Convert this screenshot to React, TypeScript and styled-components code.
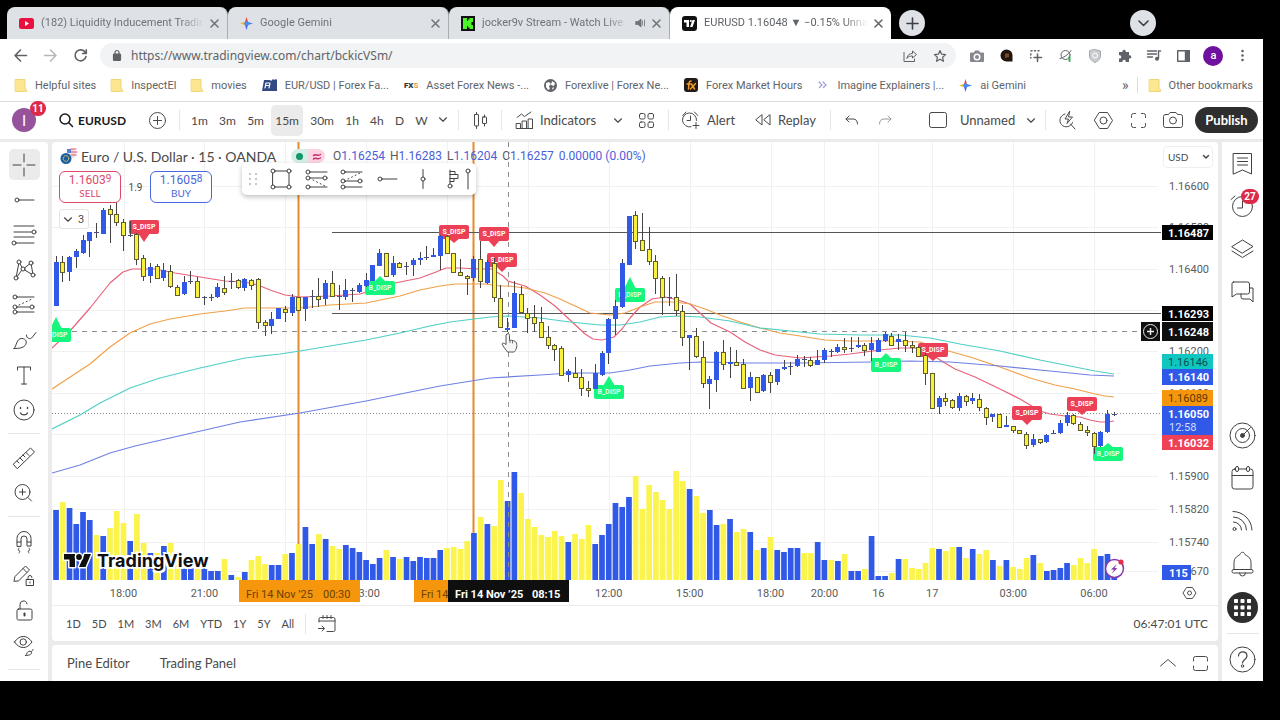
import React from "react";
import styled, { createGlobalStyle, css } from "styled-components";

const GlobalStyle = createGlobalStyle`
  * { box-sizing: border-box; }
  html, body { margin: 0; background: #000; }
  body { font-family: Lato, "Liberation Sans", sans-serif; color: #4a4a4a; }
  button, input, select { font: inherit; color: inherit; border: 0; padding: 0; margin: 0; background: none; }
  a { color: inherit; text-decoration: none; }
`;

/* ---------- shared parts ---------- */

const Glyph = styled.svg`
  display: block;
  flex: none;
  fill: none;
  stroke: currentColor;
  stroke-linecap: round;
  stroke-linejoin: round;
  overflow: visible;
`;

type IconProps = { w: number; h?: number; sw?: number; children: React.ReactNode };
const Icon = ({ w, h = w, sw = 1, children }: IconProps) => (
  <Glyph width={w} height={h} viewBox={`0 0 ${w} ${h}`} strokeWidth={sw} aria-hidden="true">
    {children}
  </Glyph>
);

const Chevron = () => (
  <Icon w={8} h={5} sw={1.2}>
    <path d="M.5.8 4 4.2 7.5.8" />
  </Icon>
);

const IconButton = styled.button<{ $w?: number }>`
  width: ${(p) => p.$w ?? 24}px;
  height: 30px;
  flex: none;
  display: flex;
  align-items: center;
  justify-content: center;
`;

const Spacer = styled.div<{ $w?: number }>`
  flex: ${(p) => (p.$w ? `0 0 ${p.$w}px` : "1")};
`;

/* ---------- browser frame ---------- */

const Page = styled.div`
  padding: 0 17px 39px 0;
  background: #000;
`;

const TabStrip = styled.div`
  height: 39px;
  padding: 7px 0 0 7px;
  display: flex;
  background: #000;
`;

const Tab = styled.div<{ $active?: boolean }>`
  width: 221px;
  height: 32px;
  padding: 0 9px 0 12px;
  display: flex;
  align-items: center;
  gap: 7px;
  border-radius: 8px 8px 0 0;
  font: 11px/32px Roboto, "Liberation Sans", sans-serif;
  background: ${(p) => (p.$active ? "#fff" : "#dee1e6")};
  color: ${(p) => (p.$active ? "#5f6368" : "#6f7378")};
  border-right: ${(p) => (p.$active ? "0" : "1px solid #a9adb2")};
`;

const TabTitle = styled.a`
  flex: 1;
  min-width: 0;
  overflow: hidden;
  white-space: nowrap;
  mask-image: linear-gradient(90deg, #000 85%, transparent);
`;

const CircleButton = styled.button`
  width: 26px;
  height: 26px;
  margin-top: 3px;
  border-radius: 50%;
  display: flex;
  align-items: center;
  justify-content: center;
  background: #dee1e6;
  color: #3c4043;
`;

const WindowButtons = styled.div`
  flex: 1;
  padding: 0 107px 0 8px;
  display: flex;
  justify-content: space-between;
`;

const NavBar = styled.div`
  height: 33px;
  padding: 0 8px;
  display: flex;
  align-items: center;
  background: #fff;
  color: #5f6368;
`;

const NavGroup = styled.div`
  width: 92px;
  flex: none;
  display: flex;
  gap: 6px;
`;

const AddressBox = styled.form`
  flex: 1;
  height: 25px;
  padding: 0 4px 0 13px;
  display: flex;
  align-items: center;
  gap: 10px;
  border-radius: 13px;
  background: #f1f3f4;
`;

const AddressInput = styled.input`
  flex: 1;
  min-width: 0;
  font: 12px "Noto Sans", sans-serif;
  color: #5f6368;
`;

const AddressActions = styled.div`
  display: flex;
  gap: 6px;
`;

const Extensions = styled.div`
  width: 299px;
  flex: none;
  padding-left: 9px;
  display: flex;
  justify-content: space-between;
`;

const Profile = styled.span`
  width: 20px;
  height: 20px;
  border-radius: 50%;
  background: #6f109f;
  color: #fff;
  font: 500 11px/19px Roboto, sans-serif;
  text-align: center;
`;

const Bookmarks = styled.nav`
  height: 30px;
  padding: 0 10px 3px 15px;
  display: flex;
  align-items: center;
  gap: 15px;
  border-bottom: 1px solid #dadce0;
  background: #fff;
  color: #5f6368;
  font: 11px Roboto, "Liberation Sans", sans-serif;
  white-space: nowrap;
`;

const Bookmark = styled.a`
  flex: none;
  display: flex;
  align-items: center;
  gap: 8px;
`;

const FxsMark = styled.span`
  font: 700 8px Roboto, sans-serif;
  color: #e8963a;
  b { color: #333; }
`;

const More = styled.button`
  margin-left: auto;
  padding-right: 8px;
  border-right: 1px solid #dadce0;
  font-size: 14px;
  line-height: 16px;
`;

const OtherBookmarks = styled(Bookmark)`
  margin-left: -4px;
`;

const Folder = () => (
  <Icon w={12} h={13}>
    <path d="M.5.5h9.5v9l1.5 1v2H.5z" fill="#fce68f" stroke="#eed57a" />
  </Icon>
);

const Close = () => (
  <Icon w={7} sw={1.5}>
    <path d="m0 0 7 7M7 0 0 7" />
  </Icon>
);

const Spark = () => (
  <Icon w={13} sw={0}>
    <path d="M6.5 0 8 5 6.5 6.5 5 5z" fill="#e8453c" />
    <path d="M13 6.5 8 8 6.5 6.5 8 5z" fill="#4285f4" />
    <path d="M6.5 13 5 8l1.5-1.5L8 8z" fill="#4267e8" />
    <path d="M0 6.5 5 5l1.5 1.5L5 8z" fill="#e9b716" />
    <circle cx="6.5" cy="6.5" r="2.2" fill="#4c8bf0" />
  </Icon>
);

/* ---------- TradingView shell ---------- */

const Shell = styled.main`
  background: #ebebeb;
`;

const TopBar = styled.header`
  height: 37px;
  padding: 0 5px 1px 0;
  display: flex;
  align-items: center;
  background: #fff;
  font-size: 13px;
  white-space: nowrap;
  color: #4a4a4a;
`;

const Account = styled.button`
  position: relative;
  width: 48px;
  height: 36px;
  flex: none;
  padding-left: 12px;
`;

const AccountDisc = styled.span`
  display: block;
  width: 24px;
  height: 24px;
  border-radius: 50%;
  background: #96539b;
  color: #fff;
  font-size: 15px;
  line-height: 24px;
`;

const Badge = styled.span<{ $top: number; $left: number; $w: number }>`
  position: absolute;
  top: ${(p) => p.$top}px;
  left: ${(p) => p.$left}px;
  width: ${(p) => p.$w}px;
  height: 15px;
  border-radius: 8px;
  background: #dc2a48;
  color: #fff;
  font: 700 10px/15px Roboto, sans-serif;
  text-align: center;
`;

const SymbolButton = styled.button`
  width: 88px;
  height: 30px;
  flex: none;
  padding-left: 11px;
  display: flex;
  align-items: center;
  gap: 5px;
  font-size: 12px;
  font-weight: 700;
  color: #1a1a1a;
`;

const Divider = styled.i`
  width: 1px;
  height: 20px;
  flex: none;
  background: #e6e6e6;
`;

const Intervals = styled.div`
  width: 278px;
  flex: none;
  padding: 0 7px;
  display: flex;
  justify-content: space-between;
`;

const Interval = styled.button<{ $on?: boolean }>`
  height: 31px;
  padding: 0 4px;
  border-radius: 5px;
  font-size: 12px;
  background: ${(p) => (p.$on ? "#ebebeb" : "none")};
`;

const LabelButton = styled.button<{ $w: number; $pad?: number; $gap?: number }>`
  width: ${(p) => p.$w}px;
  height: 30px;
  flex: none;
  padding-left: ${(p) => p.$pad ?? 0}px;
  display: flex;
  align-items: center;
  gap: ${(p) => p.$gap ?? 7}px;
`;

const Publish = styled.button`
  width: 63px;
  height: 26px;
  flex: none;
  border-radius: 13px;
  background: #2e2e2e;
  color: #fff;
  font-size: 13px;
  font-weight: 700;
`;

const Body = styled.div`
  padding-top: 3px;
  display: flex;
  gap: 4px;
`;

const SideBar = styled.aside<{ $w: number }>`
  width: ${(p) => p.$w}px;
  flex: none;
  display: flex;
  flex-direction: column;
  align-items: center;
  background: #fff;
  color: #404040;
`;

const LeftTools = styled(SideBar)`
  padding-top: 5px;
  border-top-right-radius: 4px;
`;

const Tool = styled.button<{ $on?: boolean }>`
  width: 31px;
  height: 31px;
  margin: 2px 0;
  flex: none;
  display: flex;
  align-items: center;
  justify-content: center;
  border-radius: 5px;
  background: ${(p) => (p.$on ? "#ebebeb" : "none")};
`;

const Rule = styled.hr<{ $gap: number }>`
  width: 32px;
  height: 1px;
  margin: ${(p) => p.$gap}px 0;
  flex: none;
  border: 0;
  background: #e6e6e6;
`;

const Widget = styled.button`
  position: relative;
  width: 41px;
  height: 43px;
  flex: none;
  display: flex;
  align-items: center;
  justify-content: center;
`;

const Center = styled.section`
  flex: 1;
  min-width: 0;
  display: flex;
  flex-direction: column;
`;

const ChartPane = styled.div`
  position: relative;
  background: #fff;
  border-radius: 4px 4px 0 0;
  overflow: hidden;
`;

const ChartSvg = styled.svg`
  display: block;
  width: 100%;
  height: auto;
  font-family: Roboto, "Liberation Sans", sans-serif;
  font-size: 11px;
`;

const Legend = styled.div`
  position: absolute;
  top: 5px;
  left: 8px;
  height: 18px;
  display: flex;
  align-items: center;
  white-space: nowrap;
`;

const Title = styled.h1`
  width: 214px;
  margin: 0;
  padding-left: 4px;
  font-size: 14px;
  font-weight: 400;
  color: #4a4a4a;
`;

const Status = styled.span<{ $c: string; $side: "l" | "r" }>`
  width: 17px;
  height: 14px;
  display: flex;
  align-items: center;
  justify-content: center;
  background: ${(p) => p.$c};
  ${(p) => (p.$side === "l" ? css`border-radius: 7px 0 0 7px;` : css`border-radius: 0 7px 7px 0;`)}
`;

const Ohlc = styled.dl`
  margin: 0 0 0 8px;
  display: flex;
  gap: 5px;
  font: 12px/18px Roboto, sans-serif;
`;

const OhlcItem = styled.div`
  display: flex;
  dd { margin: 0; color: #4a5fd8; }
  dt { color: #5a5a5a; }
`;

const Quotes = styled.div`
  position: absolute;
  top: 29px;
  left: 7px;
  display: flex;
  align-items: center;
  font: 11px Roboto, sans-serif;
`;

const Quote = styled.button<{ $c: string }>`
  width: 62px;
  height: 32px;
  border: 1px solid ${(p) => p.$c};
  border-radius: 6px;
  background: #fff;
  color: ${(p) => p.$c};
  font-size: 12px;
  line-height: 13px;
  sup { font-size: 10px; line-height: 1px; vertical-align: 2px; }
  small { display: block; font: 10px/13px Lato, sans-serif; }
`;

const Spread = styled.span`
  width: 29px;
  text-align: center;
  font-size: 10px;
`;

const Collapse = styled.button`
  position: absolute;
  top: 67px;
  left: 7px;
  width: 30px;
  height: 20px;
  display: flex;
  align-items: center;
  justify-content: center;
  gap: 6px;
  border: 1px solid #e3e3e3;
  border-radius: 3px;
  background: #fff;
  font: 11px Roboto, sans-serif;
`;

const Floating = styled.div`
  position: absolute;
  top: 21px;
  left: 190px;
  width: 234px;
  height: 32px;
  padding: 0 5px 0 7px;
  display: flex;
  align-items: center;
  justify-content: space-between;
  border-radius: 5px;
  background: #fff;
  color: #404040;
  box-shadow: 0 2px 5px rgba(0, 0, 0, 0.25);
`;

const Brand = styled.a`
  position: absolute;
  top: 409px;
  left: 12px;
  display: flex;
  align-items: center;
  gap: 5px;
  color: #0f0f0f;
  font: 700 18px/20px Inter, sans-serif;
  text-shadow: 1px 0 #fff, -1px 0 #fff, 0 1px #fff, 0 -1px #fff, 2px 2px #fff, -2px 2px #fff, 2px -2px #fff, -2px -2px #fff;
`;

const Currency = styled.label`
  position: absolute;
  top: 4px;
  right: 5px;
  width: 50px;
  height: 22px;
  padding: 0 3px 0 4px;
  display: flex;
  align-items: center;
  justify-content: space-between;
  border: 1px solid #efefef;
  border-radius: 4px;
  background: #fff;
  select { appearance: none; width: 30px; font: 10px Lato, sans-serif; }
`;

const RangeBar = styled.div`
  height: 36px;
  padding: 0 10px 0 14px;
  display: flex;
  align-items: center;
  border-top: 1px solid #ececec;
  border-radius: 0 0 4px 4px;
  background: #fff;
  font-size: 12px;
`;

const Range = styled.button`
  margin-right: 11px;
  font-size: 11px;
`;

const Clock = styled.button`
  margin-left: auto;
`;

const Dock = styled.div`
  height: 36px;
  margin-top: 4px;
  padding: 0 10px 0 15px;
  display: flex;
  align-items: center;
  gap: 30px;
  border-radius: 4px 4px 0 0;
  background: #fff;
  font-size: 13px;
`;

const DockEnd = styled.div`
  margin-left: auto;
  display: flex;
  align-items: center;
  gap: 17px;
`;

/* ---------- chart data ---------- */

const BLUE = "#3059e8";
const YELLOW = "#fbf44d";
const STEP = 6.74;
const xOf = (i: number) => 56.1 + STEP * i;

/* colour (b, y or d for a doji), high, low, body top, body bottom */
type Candle = [string, number, number, number, number];
const candles: Candle[] = [
  ["b", 256, 306, 262, 306], ["y", 256, 282, 262, 272], ["b", 256, 281, 257, 272], ["b", 249, 268, 251, 257],
  ["b", 235, 254, 240, 253], ["b", 232, 257, 232, 241], ["d", 223, 238, 232, 233], ["b", 208, 234, 210, 234],
  ["y", 205, 243, 209, 214], ["y", 202, 226, 214, 222], ["y", 219, 251, 222, 235], ["d", 221, 237, 235, 236],
  ["y", 233, 265, 234, 259], ["y", 255, 281, 258, 276], ["b", 263, 283, 267, 276], ["y", 264, 279, 266, 278],
  ["b", 263, 281, 270, 278], ["y", 265, 288, 271, 286], ["y", 285, 296, 287, 295], ["b", 276, 295, 282, 294],
  ["d", 271, 284, 281, 282], ["y", 277, 298, 281, 297], ["d", 296, 305, 297, 298], ["d", 294, 301, 297, 298],
  ["b", 283, 298, 287, 297], ["y", 276, 295, 288, 292], ["d", 273, 289, 281, 282], ["y", 279, 289, 280, 287],
  ["b", 278, 291, 279, 288], ["y", 279, 290, 280, 285], ["y", 278, 329, 279, 322], ["y", 320, 336, 322, 325],
  ["b", 312, 334, 319, 326], ["b", 308, 319, 308, 319], ["y", 306, 322, 309, 312], ["b", 294, 316, 297, 313],
  ["y", 297, 311, 297, 310], ["b", 297, 321, 297, 309], ["d", 290, 308, 296, 297], ["y", 278, 307, 296, 299],
  ["b", 280, 305, 283, 299], ["y", 271, 297, 283, 296], ["d", 285, 310, 296, 297], ["b", 279, 300, 290, 297],
  ["d", 288, 302, 290, 291], ["b", 283, 293, 285, 292], ["b", 273, 287, 280, 286], ["b", 265, 281, 265, 281],
  ["b", 249, 266, 253, 266], ["y", 253, 276, 253, 276], ["b", 256, 277, 263, 275], ["y", 262, 267, 263, 267],
  ["d", 262, 275, 266, 267], ["b", 258, 276, 260, 265], ["b", 252, 265, 258, 260], ["d", 246, 260, 257, 258],
  ["b", 248, 257, 255, 257], ["b", 235, 270, 236, 256], ["y", 235, 254, 236, 253], ["y", 253, 273, 253, 272],
  ["y", 259, 276, 272, 275], ["y", 275, 295, 276, 278], ["b", 256, 281, 259, 278], ["y", 241, 288, 259, 281],
  ["b", 260, 284, 262, 283], ["y", 258, 302, 263, 297], ["y", 285, 328, 298, 327], ["b", 318, 332, 328, 330],
  ["b", 281, 328, 293, 328], ["y", 286, 312, 294, 312], ["y", 308, 333, 313, 318], ["y", 305, 332, 317, 323],
  ["y", 307, 338, 322, 337], ["y", 326, 349, 337, 345], ["y", 344, 361, 345, 349], ["y", 346, 376, 348, 375],
  ["b", 369, 382, 371, 375], ["y", 357, 378, 373, 377], ["y", 369, 396, 377, 388], ["y", 381, 397, 388, 390],
  ["b", 364, 389, 373, 389], ["b", 351, 376, 353, 375], ["b", 318, 364, 319, 353], ["b", 300, 335, 306, 319],
  ["b", 259, 308, 263, 307], ["b", 216, 265, 216, 265], ["y", 211, 249, 215, 241], ["y", 213, 251, 240, 250],
  ["y", 227, 265, 249, 261], ["y", 255, 294, 261, 278], ["y", 276, 315, 278, 297], ["d", 277, 306, 297, 298],
  ["y", 274, 316, 297, 310], ["y", 305, 346, 311, 337], ["b", 335, 370, 335, 338], ["y", 328, 358, 336, 356],
  ["y", 341, 388, 357, 383], ["b", 376, 409, 379, 384], ["b", 351, 392, 352, 380], ["y", 340, 370, 352, 364],
  ["b", 347, 378, 362, 364], ["y", 350, 366, 362, 365], ["y", 359, 389, 364, 388], ["b", 372, 401, 377, 388],
  ["y", 377, 392, 377, 392], ["b", 374, 392, 375, 391], ["y", 372, 393, 375, 382], ["b", 369, 385, 369, 382],
  ["b", 360, 370, 367, 369], ["d", 362, 375, 366, 367], ["b", 355, 367, 359, 366], ["d", 356, 367, 359, 360],
  ["y", 357, 367, 360, 365], ["b", 350, 365, 360, 365], ["b", 348, 363, 350, 360], ["d", 349, 357, 351, 352],
  ["b", 344, 353, 347, 352], ["y", 338, 353, 347, 349], ["d", 337, 352, 348, 349], ["b", 337, 348, 345, 347],
  ["y", 343, 356, 345, 350], ["b", 337, 361, 343, 350], ["b", 338, 352, 340, 352], ["b", 332, 342, 334, 341],
  ["y", 333, 346, 336, 345], ["b", 334, 350, 339, 342], ["y", 332, 352, 340, 345], ["y", 341, 353, 345, 347],
  ["y", 346, 357, 347, 356], ["y", 353, 385, 355, 373], ["y", 373, 409, 373, 408], ["b", 396, 414, 398, 407],
  ["y", 393, 406, 398, 401], ["y", 399, 409, 400, 407], ["b", 393, 411, 396, 408], ["y", 395, 406, 396, 401],
  ["b", 393, 404, 398, 401], ["y", 394, 411, 399, 407], ["y", 407, 425, 408, 417], ["b", 414, 422, 414, 417],
  ["y", 414, 428, 414, 427], ["b", 416, 427, 425, 427], ["y", 426, 433, 426, 430], ["y", 430, 433, 430, 433],
  ["y", 432, 449, 434, 445], ["b", 434, 447, 439, 445], ["y", 439, 444, 439, 442], ["b", 434, 443, 435, 442],
  ["d", 430, 434, 433, 434], ["b", 420, 434, 423, 433], ["b", 412, 426, 415, 423], ["y", 414, 425, 415, 423],
  ["y", 422, 431, 424, 430], ["y", 426, 436, 430, 432], ["y", 432, 454, 433, 446], ["b", 431, 447, 432, 446],
  ["b", 410, 433, 414, 432], ["d", 412, 416, 414, 415],
];

/* volume: colour and bar height for each candle */
const volume =
  "b70 y78 b72 b56 b68 b60 y45 b44 y52 y69 y57 b39 y66 y37 b27 y27 b34 y37 y15 b12 b12 y11 b12 b9 b9 y21 b5 y3 b8 y20 y24 y16 b15 b15 y26 b27 y36 b53 b36 y46 b41 y34 y31 b35 b32 b28 b20 b16 b22 y30 b23 y21 b23 b19 b23 b22 b22 b30 y32 y33 y31 y39 b47 y63 b56 y54 y100 b79 b108 y87 y61 y53 y45 y43 y49 y44 b38 y46 y41 y55 b36 b45 b56 b77 b73 b83 y104 y71 y95 y88 y80 y71 y109 y99 b91 y84 y67 b70 b55 y56 b61 y48 y51 b48 y30 b32 y43 b30 b28 b32 b32 y27 y27 b38 b20 y20 b19 y26 b9 b9 y11 b44 b4 b4 y7 b21 y21 y12 y11 y17 y32 b31 y29 y33 b33 y22 b31 y26 y30 b20 y14 b20 y13 y11 y22 b25 y17 b9 b10 b12 b17 y15 y22 y17 y31 b24 b26 b2"
    .split(" ")
    .map((v) => ({ up: v[0] === "b", h: Number(v.slice(1)) }));

const averages: [string, string][] = [
  ["#e8627a", "52,348 70,331 90,308 110,283 123,272 132,269 142,269 155,269 175,273 200,277 225,281 245,282 258,285 270,290 285,295 300,297 330,296 360,294 370,291 395,283 420,278 436,272 446,268 460,268 480,269 492,269 503,276 508,281 525,286 540,295 555,306 570,320 585,334 593,339 602,340 614,337 622,329 630,318 640,307 652,299 665,297 678,300 690,304 700,313 711,323 730,332 745,342 760,350 775,355 800,358 830,356 850,354 880,350 900,348 915,348 930,353 940,360 955,369 975,377 1000,389 1020,399 1040,411 1050,414 1065,416 1080,417 1090,420 1100,422 1107,422 1114,421"],
  ["#f0a048", "52,389 90,364 110,347 130,333 150,324 170,319 200,314 225,311 245,308 265,308 300,308 330,305 366,303 400,296 420,290 440,286 455,284 485,284 500,286 508,286 525,288 545,293 560,299 575,306 590,313 610,315 625,313 640,307 655,302 675,302 690,304 705,309 720,315 740,322 760,328 780,333 800,336 825,340 850,341 890,341 920,342 945,350 970,357 1000,367 1030,378 1055,385 1075,389 1095,394 1105,396 1114,397"],
  ["#4fcfc4", "52,429 80,415 100,403 130,388 160,378 200,368 245,358 280,354 300,351 330,346 366,340 400,333 430,326 450,322 490,317 508,316 540,318 570,322 600,325 620,325 640,322 660,317 680,316 700,317 730,321 760,328 790,331 820,334 860,335 900,335 930,338 960,344 1000,351 1040,360 1070,366 1095,371 1114,374"],
  ["#7080e4", "52,473 80,465 110,453 135,446 170,438 205,430 240,422 300,413 366,401 440,386 490,378 540,375 570,373 610,373 630,370 650,366 680,363 700,362 750,363 800,363 870,362 910,361 950,362 1000,366 1050,371 1090,375 1114,376"],
];

const sellFlags = [[144, 220, 242], [454, 225, 243], [494, 227, 247], [502, 253, 272], [933, 343, 361], [1027, 406, 425], [1082, 397, 415]];
const buyFlags = [[56, 328, 317], [380, 281, 276], [630, 288, 277], [609, 385, 376], [886, 358, 353], [1108, 447, 443]];

const ticks: [number, string][] = [
  [186, "1.16600"], [227, "1.16500"], [269, "1.16400"], [310, ""], [351, "1.16200"], [393, "1.16100"],
  [434, ""], [476, "1.15900"], [509, "1.15820"], [542, "1.15740"], [571, "1.15670"],
];

const times: [number, string][] = [
  [10, "18:00"], [22, "21:00"], [34, ""], [46, "03:00"], [58, ""], [70, ""], [82, "12:00"], [94, "15:00"],
  [106, "18:00"], [114, "20:00"], [122, "16"], [130, "17"], [142, "03:00"], [154, "06:00"],
];

const PriceTag = ({ y, h, fill, color = "#fff", text, bold = true }: { y: number; h: number; fill: string; color?: string; text: string; bold?: boolean }) => (
  <g>
    <rect x="1162" y={y} width="51" height={h} fill={fill} />
    <text x="1168" y={y + h / 2 + 4} fill={color} fontWeight={bold ? 700 : 400}>{text}</text>
  </g>
);

const TimeTag = ({ x, fill, color, time, bold }: { x: number; fill: string; color: string; time: string; bold?: boolean }) => (
  <g fill={color} fontWeight={bold ? 700 : 400}>
    <rect x={x} y="580" width="121" height="22" fill={fill} />
    <text x={x + 7} y="598">Fri 14 Nov ’25</text>
    <text x={x + 84} y="598">{time}</text>
  </g>
);

const Chart = () => (
  <ChartSvg viewBox="52 142 1166 463" role="img" aria-label="EURUSD 15 minute candles with volume">
    <g stroke="#f1f1f1" shapeRendering="crispEdges">
      {ticks.map(([y]) => <path key={y} d={`M52 ${y}H1158`} />)}
      {times.map(([i]) => <path key={i} d={`M${Math.round(xOf(i))} 142V580`} />)}
    </g>
    {volume.map((v, i) => (
      <rect key={i} x={xOf(i) - 2.9} y={580 - v.h} width="5.7" height={v.h} fill={v.up ? BLUE : YELLOW} />
    ))}
    <path d="M298.5 142V544M473.5 142V533" stroke="#e58a2c" strokeWidth="2" />
    <path d="M332 232.5H1161M332 313.5H1161" stroke="#555" />
    <path d="M52 413.5H1161" stroke="#8a8a8a" strokeDasharray="1 2" />
    <path d="M52 331.5H1140M508.5 142V580" stroke="#8c8c8c" strokeDasharray="5 5" />
    {averages.map(([c, p]) => <polyline key={c} points={p} fill="none" stroke={c} strokeWidth="1.2" strokeLinejoin="round" />)}
    <g fontSize="7" fontWeight="700" textAnchor="middle">
      {sellFlags.map(([x, y, tip]) => (
        <g key={x} fill="#ec4056">
          <rect x={x - 15} y={y} width="30" height="14" rx="2" />
          <path d={`M${x - 6} ${y + 13}h12L${x} ${tip}z`} />
          <text x={x} y={y + 9} fill="#fff">S_DISP</text>
        </g>
      ))}
      {buyFlags.map(([x, y, tip]) => (
        <g key={x} fill="#16f57c">
          <rect x={x - 15} y={y} width="30" height="14" rx="2" />
          <path d={`M${x - 6} ${y + 1}h12L${x} ${tip}z`} />
          <text x={x} y={y + 9} fill="#e4ffe9">B_DISP</text>
        </g>
      ))}
    </g>
    {candles.map(([c, hi, lo, top, bottom], i) => {
      const x = Math.floor(xOf(i)) + 0.5;
      return (
        <g key={i}>
          <path d={`M${x} ${hi}V${lo}`} stroke="#444" />
          {c === "b" && <rect x={x - 2.5} y={top} width="5" height={Math.max(2, bottom - top)} fill={BLUE} />}
          {c === "y" && <rect x={x - 2} y={top + 0.5} width="4" height={Math.max(1, bottom - top)} fill="#f8f03c" stroke="#5f5c30" />}
          {c === "d" && <path d={`M${x - 2.5} ${top + 0.5}h5`} stroke="#4a4f88" />}
        </g>
      );
    })}
    <g fill="#5a5a5a" textAnchor="middle">
      {times.map(([i, t]) => <text key={i} x={xOf(i)} y="597">{t}</text>)}
    </g>
    <g fill="#5a5a5a">
      {ticks.map(([y, t]) => <text key={y} x="1169" y={y + 4}>{t}</text>)}
    </g>
    <TimeTag x={239} fill="#f5960c" color="#6b4200" time="00:30" />
    <TimeTag x={414} fill="#f5960c" color="#6b4200" time="07:00" />
    <TimeTag x={448} fill="#0f0f0f" color="#fff" time="08:15" bold />
    <PriceTag y={225} h={15} fill="#000" text="1.16487" />
    <PriceTag y={306} h={15} fill="#000" text="1.16293" />
    <PriceTag y={322} h={19} fill="#0f0f0f" text="1.16248" />
    <PriceTag y={354} h={15} fill="#0fc7c0" color="#07504d" text="1.16146" bold={false} />
    <PriceTag y={369} h={16} fill={BLUE} text="1.16140" />
    <PriceTag y={390} h={16} fill="#f5960c" color="#5e3a00" text="1.16089" bold={false} />
    <rect x="1162" y="420" width="51" height="15" fill={BLUE} />
    <PriceTag y={406} h={16} fill={BLUE} text="1.16050" />
    <text x="1169" y="431" fill="#d6defc">12:58</text>
    <PriceTag y={435} h={15} fill="#ef4056" text="1.16032" />
    <rect x="1162" y="565" width="29" height="15" fill={BLUE} />
    <text x="1169" y="577" fill="#fff" fontWeight="700">115</text>
    <rect x="1141" y="322" width="19" height="19" fill="#0f0f0f" />
    <g fill="none" stroke="#e8e8e8">
      <circle cx="1150.5" cy="331.5" r="7" />
      <path d="M1147 331.5h7M1150.5 328v7" strokeWidth="1.5" />
    </g>
    <circle cx="1114.5" cy="568.5" r="9" fill="#fff" stroke="#8a3aa8" strokeWidth="1.5" />
    <path d="m1117 564-6 5.5 3 .3-2.5 4 6-5.6-3-.3z" fill="#8a3aa8" />
    <circle cx="1121" cy="562" r="2.6" fill="#e0304a" />
    <g fill="none" stroke="#505050">
      <path d="M1186.5 587.5h6l3.5 5.5-3.5 5.5h-6l-3.500-5.5z" />
      <circle cx="1189.5" cy="593" r="2" />
    </g>
    <path d="M507 334c1.5-1 2.5 0 2.5 1.5v5c2-.8 6 .2 7 2.5 1 3-.5 8-2.5 9h-6.500c-1.5-2-5-6.5-5.5-8 .5-1.5 2-1 4 .5v-9.500z" fill="#f6f6f6" stroke="#555" />
    <path d="M510 340v3M512.5 341v2.5" stroke="#777" />
  </ChartSvg>
);

/* ---------- toolbars ---------- */

const node = (x: number, y: number) => <circle key={`${x}-${y}`} cx={x} cy={y} r="2" fill="#fff" />;

const drawingTools: [string, React.ReactNode][] = [
  ["Cross", <path d="M5 16h8M19 16h8M16 5v8M16 19v8" />],
  ["Trend line", <><path d="M11 16h15" />{node(9, 16)}</>],
  ["Fib retracement", <><path d="M6 7h20M6 13h18M6 18h20M8 24h18" />{node(26, 13)}{node(6, 24)}</>],
  ["Patterns", <><path d="M8 24 11 8l4 7 8-6 2 12-10-6z" />{[node(8, 24), node(11, 8), node(15, 15), node(23, 9), node(25, 21)]}</>],
  ["Projection", <><path d="M9 8h17M9 18h15M9 23h17" /><path d="m11 16 13-6" strokeDasharray="1 3" />{[node(7, 8), node(7, 18), node(24, 18), node(7, 23)]}</>],
  ["Brush", <><path d="M6 24.5C9 22 8 14.5 14 14.5c4 0 5.5 4 3 7-2 2.5-6 3-11 3z" /><path d="M18.5 11c-.5 3.5 4 5 6 2l3.5-4.5" /></>],
  ["Text", <path d="M9.5 11V8h13v3M16 8v17M13.5 25h5" />],
  ["Icons", <><circle cx="16" cy="16" r="10" /><path d="M12.5 13.5v1M19.5 13.5v1M12.5 19c1.5 2.5 5.5 2.5 7 0" strokeWidth="1.4" /></>],
];

const measureTools: [string, React.ReactNode][] = [
  ["Measure", <><path d="M5.5 22 22.5 6l4 4-17 16.5z" /><path d="m9 19 2 2M12 16l3 3M15 13l2 2M18 10.5l3 3" /></>],
  ["Zoom in", <><circle cx="14.5" cy="15" r="7.5" /><path d="m20 20.5 3.5 3.5M11.5 15h6M14.5 12v6" /></>],
];

const lockTools: [string, React.ReactNode][] = [
  ["Magnet", <><path d="M9 21V13.5a7 7 0 0 1 14 0V21h-4v-7a3 3 0 0 0-6 0v7zM9 17h4M19 17h4" /><path d="m11 23-1 2 2 1-1 2M21 23l1 2-2 1 1 2" strokeWidth=".8" /></>],
  ["Stay in drawing mode", <><path d="m6 21 1-4.5L17.5 6l4 4L11 20.5zM15 8.5l4 4" /><path d="M18.5 19.5h7v6h-7zM20 19.5v-2a2 2 0 0 1 4 0" /><path d="M22 22v1" /></>],
  ["Lock all", <><rect x="9" y="14" width="15" height="11" rx="1.5" /><path d="M12 14v-4a3.5 3.5 0 0 1 7-1" /><path d="M16.5 18.5v2" strokeWidth="2" /></>],
  ["Hide all", <><path d="M6.5 12c5-7.5 12.5-7.5 17.5 0-5 7.5-12.5 7.5-17.5 0z" /><circle cx="15.2" cy="12" r="3.2" /><path d="M17.5 25.5c2-.5.5-4 4-4s3 4-4 4zM22 21c1 1.5 2 .5 3-1.5" /></>],
];

const ToolButton = ({ name, on, children }: { name: string; on?: boolean; children: React.ReactNode }) => (
  <Tool $on={on} aria-label={name}>
    <Icon w={32}>{children}</Icon>
  </Tool>
);

const widgetsTop: [string, React.ReactNode][] = [
  ["Watchlist", <path d="M6.5 5.5h18V26L15.5 22l-9 4zM10.5 10h10M10.5 13.5h10M10.5 17h10" />],
  ["Alerts", <><circle cx="15.5" cy="15.5" r="10" /><path d="M15.5 10v7h-5M4 8.5 8 5" /></>],
  ["Object tree", <><path d="m5 12.5 10.5-6.5L26 12.5l-10.5 6.5z" /><path d="m5 17 10.5 6.5L26 17" /></>],
  ["Chats", <><path d="M6.5 5h14q2 0 2 2v8q0 2-2 2H9.5L5 20V6.5Q5 5 6.5 5z" /><path d="M22.5 11H26v14l-3-3h-7q-2 0-2-2v-3" /></>],
];

const widgetsBottom: [string, React.ReactNode][] = [
  ["Screener", <><circle cx="15.5" cy="15.5" r="12.5" /><circle cx="15.5" cy="15.5" r="7" /><circle cx="15.5" cy="15.5" r="2" fill="currentColor" /><path d="m15.5 15.5 8-8" /></>],
  ["Calendar", <><rect x="5" y="6" width="21" height="20" rx="2.5" /><path d="M5 12.5h21" /><rect x="8.5" y="3.5" width="3" height="5" rx="1.5" fill="#fff" /><rect x="19.5" y="3.5" width="3" height="5" rx="1.5" fill="#fff" /></>],
  ["News", <><circle cx="7.5" cy="23" r="1.5" /><path d="M6.5 16a8 8 0 0 1 8 8M6.5 11a13 13 0 0 1 13 13M6 5.5A19 19 0 0 1 25 24" /></>],
  ["Notifications", <><path d="M7 20.5v-7c0-5 4-6.5 6-8 1-3 4-3 5 0 2 1.5 6 3 6 8v7" /><rect x="5" y="20.5" width="21" height="3.5" rx="1.5" /><path d="M12.5 24a3 3 0 0 0 6 0" /></>],
];

const intervals = ["1m", "3m", "5m", "15m", "30m", "1h", "4h", "D", "W"];

export default function App() {
  return (
    <Page>
      <GlobalStyle />
      <TabStrip>
        <Tab>
          <Icon w={15} h={11} sw={0}>
            <rect width="15" height="11" rx="2.5" fill="#e8103c" />
            <path d="M6 3v5l4-2.5z" fill="#fff" />
          </Icon>
          <TabTitle href="#">(182) Liquidity Inducement Trading</TabTitle>
          <Close />
        </Tab>
        <Tab>
          <Spark />
          <TabTitle href="#">Google Gemini</TabTitle>
          <Close />
        </Tab>
        <Tab>
          <Icon w={14} h={15} sw={0}>
            <rect width="14" height="15" fill="#111" />
            <path d="M2 2h4v3h1V3.5h1.500V2H12v4h-1.5v3H12v4H8.5v-1.5H7V10H6v3H2z" fill="#4cf52a" />
          </Icon>
          <TabTitle href="#">jocker9v Stream - Watch Live</TabTitle>
          <Icon w={10} h={8} sw={0.8}>
            <path d="M0 2.5h2L5 0v8L2 5.5H0z" fill="currentColor" />
            <path d="M6.5 2v4M8.5 1v6" />
          </Icon>
          <Close />
        </Tab>
        <Tab $active>
          <Icon w={15} sw={0}>
            <rect width="15" height="15" rx="3" fill="#111" />
            <path d="M2 4h5v7H4.5V6.5H2zM10.5 4H13l-2.5 7H8z" fill="#fff" />
            <circle cx="8.8" cy="5" r="1.1" fill="#fff" />
          </Icon>
          <TabTitle href="#">EURUSD 1.16048 ▼ −0.15% Unnamed</TabTitle>
          <Close />
        </Tab>
        <WindowButtons>
          <CircleButton aria-label="New tab"><Icon w={11} sw={1.6}><path d="M5.5 0v11M0 5.5h11" /></Icon></CircleButton>
          <CircleButton aria-label="Search tabs"><Icon w={9} h={5} sw={1.6}><path d="m0 0 4.5 4.5L9 0" /></Icon></CircleButton>
        </WindowButtons>
      </TabStrip>

      <NavBar>
        <NavGroup>
          <IconButton aria-label="Back"><Icon w={13} sw={1.6}><path d="M12.5 6.5H1M6.5 1 1 6.5 6.5 12" /></Icon></IconButton>
          <IconButton aria-label="Forward"><Icon w={13} sw={1.5}><path d="M.5 6.5H12M6.5 1 12 6.5 6.5 12" stroke="#b4b7bb" /></Icon></IconButton>
          <IconButton aria-label="Reload"><Icon w={13} sw={1.6}><path d="M11.5 3.8A5.5 5.5 0 1 0 12 7.5M12.3.8v3.7H8.5" /></Icon></IconButton>
        </NavGroup>
        <AddressBox>
          <Icon w={8} h={11} sw={1.2}>
            <rect x=".5" y="4" width="7" height="6.5" rx=".8" fill="currentColor" />
            <path d="M2 4V2.5a2 2 0 0 1 4 0V4" />
          </Icon>
          <AddressInput aria-label="Address" defaultValue="https://www.tradingview.com/chart/bckicVSm/" />
          <AddressActions>
            <IconButton aria-label="Share" type="button"><Icon w={14} h={12}><path d="M1 2.5V11.5h10.5V9M4 8c.5-3 2.5-4.5 5.5-4.5V1L13.5 4.5 9.5 8V6C7 6 5.5 6.5 4 8z" /></Icon></IconButton>
            <IconButton aria-label="Bookmark" type="button"><Icon w={12} sw={1.2}><path d="m6 .5 1.6 3.7 4 .4-3 2.7.9 4L6 9.2l-3.5 2.1.9-4-3-2.7 4-.4z" /></Icon></IconButton>
          </AddressActions>
        </AddressBox>
        <Extensions>
          <IconButton aria-label="Capture">
            <Icon w={14} h={12} sw={0}><path d="M1 2.5h3L5 .5h4l1 2h3q1 0 1 1V11q0 1-1 1H1q-1 0-1-1V3.5q0-1 1-1z" fill="#85888c" /><circle cx="7" cy="7" r="3.5" fill="#fff" /><circle cx="7" cy="7" r="2" fill="#85888c" /></Icon>
          </IconButton>
          <IconButton aria-label="Dark theme">
            <Icon w={13} sw={0}><path d="M6.5.5A6 6 0 0 1 12.5 6v6.5h-6a6 6 0 0 1 0-12z" fill="#20150f" /><path d="M5 4.5h4L9 8l-4 1z" fill="#7a4a24" /></Icon>
          </IconButton>
          <IconButton aria-label="Select region">
            <Icon w={12} sw={1.5}><path d="M7.5 4v7.5M4 7.5h7.5" /><path d="M1 .8h9M.8 4v4" strokeDasharray="1 2.5" /></Icon>
          </IconButton>
          <IconButton aria-label="Blocker">
            <Icon w={13}><circle cx="6.5" cy="6" r="4.5" /><path d="M1 9.5C4 9 9 6 12 1.5" /><path d="M10.5 8v4" stroke="#35a853" strokeWidth="2" /></Icon>
          </IconButton>
          <IconButton aria-label="Shield">
            <Icon w={12} h={14}><path d="M6 .5 11.5 2v5c0 3-2.5 5-5.5 6.5C3 12 .5 10 .5 7V2z" fill="#c9ccd0" stroke="#a5a9ae" /><circle cx="6" cy="6.5" r="2.5" stroke="#fff" /></Icon>
          </IconButton>
          <IconButton aria-label="Extensions">
            <Icon w={13} sw={0}><path d="M1 3h3.5a1.7 1.7 0 1 1 3.2 0H11v3.3a1.7 1.7 0 1 1 0 3.2V13H7.7a1.7 1.7 0 1 0-3.2 0H1V9.5a1.7 1.7 0 1 0 0-3.2z" fill="currentColor" /></Icon>
          </IconButton>
          <IconButton aria-label="Media controls">
            <Icon w={14} h={11} sw={1.4}><path d="M.5 1h9M.5 4h9M.5 7h5M11.5 8.5V1h2" /><circle cx="10" cy="8.8" r="1.3" fill="currentColor" /></Icon>
          </IconButton>
          <IconButton aria-label="Side panel">
            <Icon w={13} h={12} sw={1.4}><rect x=".7" y=".7" width="11.6" height="10.6" /><path d="M8.5 1h3.5v10H8.5z" fill="currentColor" /></Icon>
          </IconButton>
          <IconButton aria-label="Profile"><Profile>a</Profile></IconButton>
          <IconButton aria-label="Menu">
            <Icon w={3} h={13} sw={0}><g fill="currentColor"><circle cx="1.5" cy="2" r="1.3" /><circle cx="1.5" cy="6.5" r="1.3" /><circle cx="1.5" cy="11" r="1.3" /></g></Icon>
          </IconButton>
        </Extensions>
      </NavBar>

      <Bookmarks aria-label="Bookmarks">
        <Bookmark href="#"><Folder />Helpful sites</Bookmark>
        <Bookmark href="#"><Folder />InspectEl</Bookmark>
        <Bookmark href="#"><Folder />movies</Bookmark>
        <Bookmark href="#">
          <Icon w={15} h={12} sw={0}><path d="M2 1h6l1 1 2-2 1 1 2-1 1 1v11H0z" fill="#314a86" /><path d="M3 9l1-5h3M3.5 6.5h3M8 4l-1 5" stroke="#fff" strokeWidth="1.2" /></Icon>
          EUR/USD | Forex Fa...
        </Bookmark>
        <Bookmark href="#"><FxsMark><b>FX</b>S</FxsMark>Asset Forex News -...</Bookmark>
        <Bookmark href="#">
          <Icon w={13} sw={0}><circle cx="6.5" cy="6.5" r="6.5" fill="#5f6368" /><path d="M2 4l3-1 2 2-2 2 1 3-2 1-2-3zM8 2l3 2-1 3-3-1zM8 9l2-1-1 3z" fill="#fff" /></Icon>
          Forexlive | Forex Ne...
        </Bookmark>
        <Bookmark href="#">
          <Icon w={14} sw={1.5}><rect width="14" height="14" rx="3" fill="#221a16" stroke="none" /><path d="M7 3c-2 0-2 1-2.5 8M3 6h4M7.5 6l3 5M11.5 5.5l-5 5.5" stroke="#f09a28" /></Icon>
          Forex Market Hours
        </Bookmark>
        <Bookmark href="#">
          <Icon w={12} h={12} sw={1.2}><path d="m2 3 3 3-3 3M6 3l3 3-3 3" stroke="#9a97dc" strokeDasharray="2 1" /></Icon>
          Imagine Explainers |...
        </Bookmark>
        <Bookmark href="#"><Spark />ai Gemini</Bookmark>
        <More aria-label="More bookmarks">»</More>
        <OtherBookmarks href="#"><Folder />Other bookmarks</OtherBookmarks>
      </Bookmarks>

      <Shell>
        <TopBar>
          <Account aria-label="Account"><AccountDisc>I</AccountDisc><Badge $top={-1} $left={30} $w={16}>11</Badge></Account>
          <SymbolButton>
            <Icon w={14} sw={1.5}><circle cx="6" cy="6" r="5" /><path d="m9.8 9.8 3.7 3.7" /></Icon>
            EURUSD
          </SymbolButton>
          <IconButton $w={43} aria-label="Compare"><Icon w={17}><circle cx="8.5" cy="8.5" r="8" /><path d="M8.5 4.5v8M4.5 8.5h8" /></Icon></IconButton>
          <Divider />
          <Intervals>
            {intervals.map((t) => <Interval key={t} $on={t === "15m"}>{t}</Interval>)}
            <IconButton $w={16} aria-label="More intervals"><Chevron /></IconButton>
          </Intervals>
          <Divider />
          <IconButton $w={42} aria-label="Candles"><Icon w={13} h={17}><path d="M2.5.5v2M2.5 14v2.5M10.5 3v2M10.5 11.5v2.5" /><rect x=".5" y="2.5" width="4" height="11.5" rx=".5" /><rect x="8.5" y="5" width="4" height="6.5" rx=".5" /></Icon></IconButton>
          <Divider />
          <LabelButton $w={102} $pad={14}>
            <Icon w={17} h={17}><path d="M1 5.5 5.5 2l3 2.5L15 0M.5 11.5h4v5h-4zM6.5 9h4v7.5h-4zM12.5 7h4v9.5h-4zM.5 16.5h16" /></Icon>
            Indicators
          </LabelButton>
          <IconButton $w={28} aria-label="Favourite indicators"><Chevron /></IconButton>
          <IconButton $w={28} aria-label="Layouts"><Icon w={15}><g><rect x=".5" y=".5" width="5.5" height="5.5" rx="1.5" /><rect x="9" y=".5" width="5.5" height="5.5" rx="1.5" /><rect x=".5" y="9" width="5.5" height="5.5" rx="1.5" /><rect x="9" y="9" width="5.5" height="5.5" rx="1.5" /></g></Icon></IconButton>
          <Spacer $w={8} />
          <Divider />
          <LabelButton $w={86} $pad={13}>
            <Icon w={18}><path d="M14.5 9.5A7 7 0 1 0 9 15.8M8.5 5v4.5H5M.8 4.5 4 1M12.5 1l3.2 3.5M14 11.5v6M11 14.5h6" /></Icon>
            Alert
          </LabelButton>
          <LabelButton $w={75}>
            <Icon w={16} h={12}><path d="M7 1v10L1 6zM15 1v10L9 6z" /></Icon>
            Replay
          </LabelButton>
          <Divider />
          <IconButton $w={40} aria-label="Undo"><Icon w={13} h={10}><path d="M4 1 1 4l3 3M1 4h7q4.5 0 4.5 5" /></Icon></IconButton>
          <IconButton $w={28} aria-label="Redo"><Icon w={13} h={10}><path d="m9 1 3 3-3 3M12 4H5Q.5 4 .5 9" stroke="#9a9a9a" /></Icon></IconButton>
          <Spacer />
          <LabelButton $w={88} $gap={13}>
            <Icon w={18} h={16}><rect x=".5" y=".5" width="17" height="15" rx="2" /></Icon>
            Unnamed
          </LabelButton>
          <IconButton $w={28} aria-label="Manage layouts"><Chevron /></IconButton>
          <Divider />
          <IconButton $w={42} aria-label="Quick search"><Icon w={18} h={19}><path d="M7 3a6.5 6.5 0 1 0 7.5 8.5M12.5 13l4.5 5M11.5.5 7 8h3.5L9 12.5 14.5 6H11z" /></Icon></IconButton>
          <IconButton $w={30} aria-label="Settings"><Icon w={19} h={17}><path d="M5.5.5h8l5 8-5 8h-8l-5-8z" /><circle cx="9.5" cy="8.5" r="3.5" /></Icon></IconButton>
          <IconButton $w={41} aria-label="Fullscreen"><Icon w={15}><path d="M.5 4.5v-2q0-2 2-2h2M10.5.5h2q2 0 2 2v2M14.5 10.5v2q0 2-2 2h-2M4.5 14.5h-2q-2 0-2-2v-2" /></Icon></IconButton>
          <IconButton $w={28} aria-label="Snapshot"><Icon w={20} h={16}><path d="M2.5 2.5h3l1.5-2h6l1.5 2h3q2 0 2 2v9q0 2-2 2h-15q-2 0-2-2v-9q0-2 2-2z" /><circle cx="10" cy="8.5" r="3.5" /></Icon></IconButton>
          <Spacer $w={8} />
          <Publish>Publish</Publish>
        </TopBar>

        <Body>
          <LeftTools $w={48} aria-label="Drawing tools">
            {drawingTools.map(([n, d], i) => <ToolButton key={n} name={n} on={i === 0}>{d}</ToolButton>)}
            <Rule $gap={6} />
            {measureTools.map(([n, d]) => <ToolButton key={n} name={n}>{d}</ToolButton>)}
            <Rule $gap={6} />
            {lockTools.map(([n, d]) => <ToolButton key={n} name={n}>{d}</ToolButton>)}
            <Rule $gap={6} />
          </LeftTools>

          <Center>
            <ChartPane>
              <Chart />
              <Legend>
                <Icon w={17} sw={0}>
                  <circle cx="11.5" cy="5.5" r="5" fill="#f6dfe2" /><path d="M11 1h5M11 4h6M11 7h5" stroke="#e05468" strokeWidth="1.2" /><path d="M7 1h4v4H7z" fill="#5b7fd0" />
                  <circle cx="6" cy="10.5" r="6" fill="#fff" /><circle cx="6" cy="10.5" r="5.5" fill="#1c5fa5" /><circle cx="6" cy="10.5" r="2.8" fill="none" stroke="#e0c35a" strokeDasharray="1 1.2" strokeWidth="1" />
                </Icon>
                <Title>Euro / U.S. Dollar · 15 · OANDA</Title>
                <Status $c="#d5efe6" $side="l"><Icon w={7} sw={0}><circle cx="3.5" cy="3.5" r="3.5" fill="#14956c" /></Icon></Status>
                <Status $c="#fbd3e2" $side="r"><Icon w={8} h={7} sw={1.5}><path d="M.5 2.5c2-2 4 1 7-1M.5 6c2-2 4 1 7-1" stroke="#c92a6a" /></Icon></Status>
                <Ohlc>
                  <OhlcItem><dt>O</dt><dd>1.16254</dd></OhlcItem>
                  <OhlcItem><dt>H</dt><dd>1.16283</dd></OhlcItem>
                  <OhlcItem><dt>L</dt><dd>1.16204</dd></OhlcItem>
                  <OhlcItem><dt>C</dt><dd>1.16257</dd></OhlcItem>
                  <OhlcItem><dd>0.00000 (0.00%)</dd></OhlcItem>
                </Ohlc>
              </Legend>
              <Quotes>
                <Quote $c="#dd4a68">1.1603<sup>9</sup><small>SELL</small></Quote>
                <Spread>1.9</Spread>
                <Quote $c="#4a66dc">1.1605<sup>8</sup><small>BUY</small></Quote>
              </Quotes>
              <Collapse><Chevron />3</Collapse>
              <Floating role="toolbar" aria-label="Favourite drawing tools">
                <Icon w={8} h={12} sw={0}><g fill="#b5b5b5">{[1, 6, 11].map((y) => <React.Fragment key={y}><circle cx="1" cy={y} r="1" /><circle cx="7" cy={y} r="1" /></React.Fragment>)}</g></Icon>
                <IconButton aria-label="Rectangle"><Icon w={20} h={20}><path d="M2 2h16v16H2z" />{[node(2, 2), node(18, 2), node(2, 18), node(18, 18)]}</Icon></IconButton>
                <IconButton aria-label="Short position"><Icon w={21} h={20}><path d="M4 3h17M4 9h15M4 18h17" /><path d="m7 11 12 6" strokeDasharray="1 3" />{[node(2, 3), node(2, 9), node(19, 9), node(2, 18)]}</Icon></IconButton>
                <IconButton aria-label="Long position"><Icon w={21} h={20}><path d="M4 3h17M4 12h15M4 18h17" /><path d="m7 10 12-6" strokeDasharray="1 3" />{[node(2, 3), node(2, 12), node(19, 12), node(2, 18)]}</Icon></IconButton>
                <IconButton aria-label="Horizontal ray"><Icon w={20} h={4}><path d="M4 2h15" />{node(2, 2)}</Icon></IconButton>
                <IconButton aria-label="Vertical line"><Icon w={4} h={20}><path d="M2 .5v19" />{node(2, 10)}</Icon></IconButton>
                <IconButton aria-label="Volume profile"><Icon w={24} h={20}><path d="M3 1v14M3 2.5h5v3H3M3 5.5h8v4H3M3 9.5h4v3H3" />{node(3, 17)}<path d="M21 4v16" />{node(21, 2)}</Icon></IconButton>
              </Floating>
              <Brand href="#">
                <Icon w={28} h={16} sw={0}>
                  <g fill="#0f0f0f" stroke="#fff" strokeWidth="3" paintOrder="stroke"><path d="M0 1h11v13H5.5V6.5H0zM20.5 1h6.5l-5.5 13H15z" /><circle cx="15" cy="4" r="2.9" /></g>
                </Icon>
                TradingView
              </Brand>
              <Currency>
                <select aria-label="Currency"><option>USD</option></select>
                <Icon w={6} h={4} sw={1.5}><path d="m.5.5 2.5 2.5L5.5.5" /></Icon>
              </Currency>
            </ChartPane>
            <RangeBar>
              {["1D", "5D", "1M", "3M", "6M", "YTD", "1Y", "5Y", "All"].map((r) => <Range key={r}>{r}</Range>)}
              <Divider />
              <IconButton $w={42} aria-label="Go to date"><Icon w={18} h={17}><path d="M1 7V4q0-1.5 1.5-1.5h13Q17 2.5 17 4v11q0 1.5-1.5 1.5H9M1 6h16M5 .5v3M9 .5v3M13 .5v3M.5 13.5H6M4 11l2.5 2.5L4 16" /></Icon></IconButton>
              <Clock>06:47:01 UTC</Clock>
            </RangeBar>
            <Dock>
              <button>Pine Editor</button>
              <button>Trading Panel</button>
              <DockEnd>
                <button aria-label="Expand panel"><Icon w={16} h={8}><path d="M.5 7 8 .5 15.5 7" /></Icon></button>
                <button aria-label="Maximise panel"><Icon w={15}><path d="M.5 5V2.5q0-2 2-2h10q2 0 2 2V5M14.5 10v2.5q0 2-2 2h-10q-2 0-2-2V10" /></Icon></button>
              </DockEnd>
            </Dock>
          </Center>

          <SideBar $w={41} aria-label="Widgets">
            {widgetsTop.map(([n, d]) => (
              <Widget key={n} aria-label={n}>
                <Icon w={31}>{d}</Icon>
                {n === "Alerts" && <Badge $top={4} $left={19} $w={18}>27</Badge>}
              </Widget>
            ))}
            <Spacer />
            {widgetsBottom.map(([n, d]) => <Widget key={n} aria-label={n}><Icon w={31}>{d}</Icon></Widget>)}
            <Widget aria-label="Apps">
              <Icon w={31} sw={0}>
                <circle cx="15.5" cy="15.5" r="15.5" fill="#2e2e2e" />
                {[7, 13.5, 20].map((y) => [7, 13.5, 20].map((x) => <rect key={`${x}-${y}`} x={x} y={y} width="4" height="4" rx=".8" fill="#fff" />))}
              </Icon>
            </Widget>
            <Rule $gap={4} />
            <Widget aria-label="Help">
              <Icon w={31}><circle cx="15.5" cy="15.5" r="12.5" /><path d="M11.5 12c0-5.5 8.5-5.5 8.5 0 0 3.5-4.5 3.5-4.5 7" strokeWidth="1.2" /><circle cx="15.5" cy="22" r="1.2" /></Icon>
            </Widget>
          </SideBar>
        </Body>
      </Shell>
    </Page>
  );
}
